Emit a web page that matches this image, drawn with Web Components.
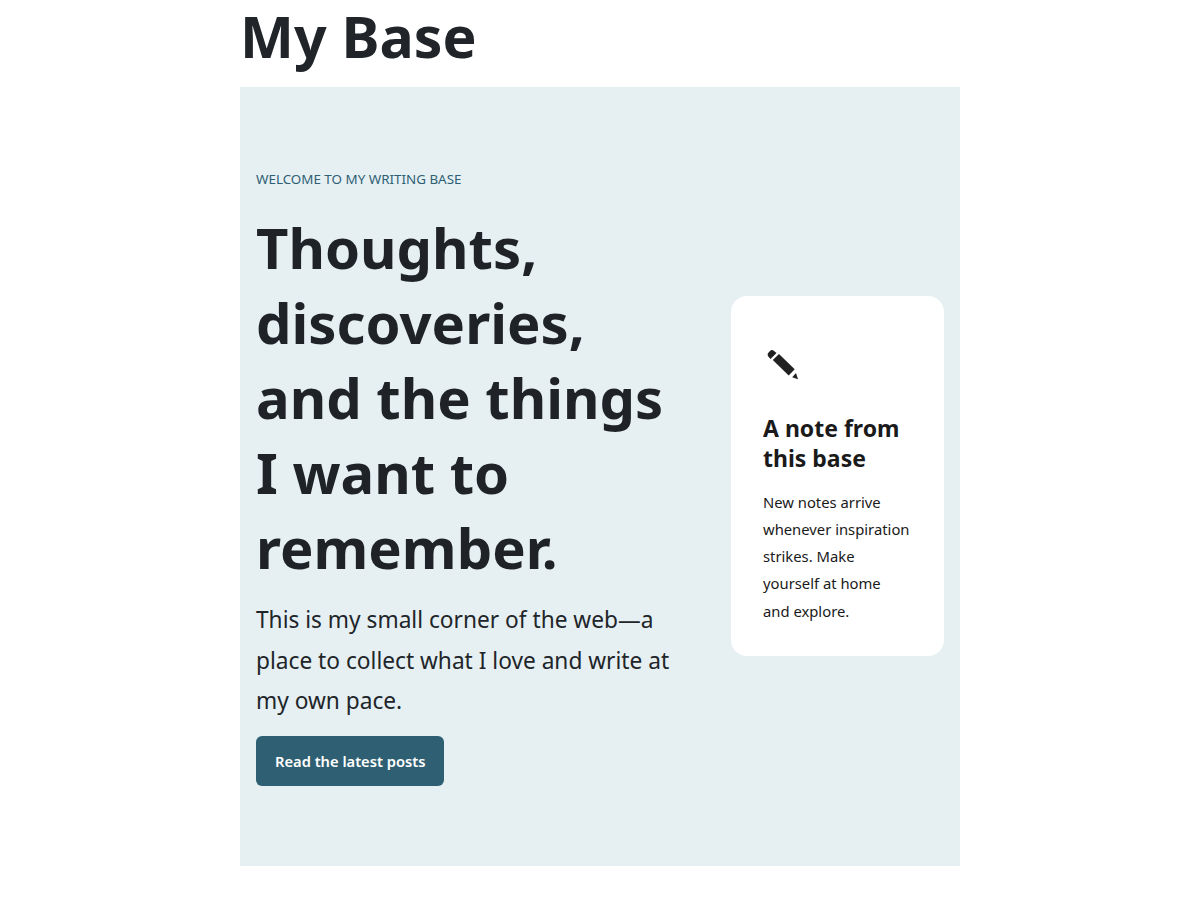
<!DOCTYPE html>
<html lang="en">
<head>
<meta charset="utf-8">
<title>My Base</title>
<style>
  body{
    margin: 0;
    background: #fff;
    color: #212529;
    font-family: "Noto Sans", "Open Sans", sans-serif;
  }
</style>
</head>
<body>
<base-page>
  <h1 slot="title">My Base</h1>
  <hero-section>
    <note-card></note-card>
  </hero-section>
</base-page>

<script>
class basePage extends HTMLElement{
    constructor(){
        super();
        this.attachShadow({mode: "open"});
        this.shadowRoot.innerHTML = `
            <style>
                :host{
                    display: block;
                    width: 720px;
                    margin: 0 auto;
                }
                ::slotted(h1){
                    margin: 0;
                    height: 87px;
                    font-size: 57.2px;
                    line-height: 72px;
                    font-weight: 700;
                    color: #212529;
                }
            </style>
            <slot name="title"></slot>
            <slot></slot>
        `;
    }
}

class heroSection extends HTMLElement{
    constructor(){
        super();
        this.attachShadow({mode: "open"});
        this.shadowRoot.innerHTML = `
            <style>
                :host{
                    display: block;
                    height: 779px;
                    box-sizing: border-box;
                    padding: 2px 16px 0;
                    background: #e6f0f3;
                }
                .row{
                    height: 100%;
                    display: grid;
                    grid-template-columns: 1fr 213px;
                    column-gap: 32px;
                    align-items: center;
                }
                .eyebrow{
                    margin: 0 0 20px;
                    font-size: 13.4px;
                    line-height: 21px;
                    color: #2f5f73;
                }
                h2{
                    margin: 0 0 15px;
                    font-size: 56.2px;
                    line-height: 75px;
                    font-weight: 700;
                    color: #1f2328;
                }
                p.lead{
                    margin: 0 0 14px;
                    font-size: 22.7px;
                    line-height: 40.8px;
                    color: #212529;
                }
                a{
                    display: inline-block;
                    padding: 12px 19px;
                    border-radius: 6px;
                    background: #2f5f73;
                    color: #fff;
                    font-size: 14.7px;
                    line-height: 26px;
                    font-weight: 600;
                    text-decoration: none;
                }
            </style>
            <div class="row">
                <div>
                    <p class="eyebrow">WELCOME TO MY WRITING BASE</p>
                    <h2>Thoughts,<br>discoveries,<br>and the things<br>I want to<br>remember.</h2>
                    <p class="lead">This is my small corner of the web—a<br>place to collect what I love and write at<br>my own pace.</p>
                    <a href="#">Read the latest posts</a>
                </div>
                <slot></slot>
            </div>
        `;
    }
}

class noteCard extends HTMLElement{
    constructor(){
        super();
        this.attachShadow({mode: "open"});
        this.shadowRoot.innerHTML = `
            <style>
                :host{
                    display: block;
                    box-sizing: border-box;
                    height: 360px;
                    margin-bottom: 4px;
                    padding: 49px 32px 0;
                    border-radius: 16px;
                    background: #fff;
                    color: #1a1a1a;
                }
                svg{
                    display: block;
                    width: 36px;
                    height: 36px;
                    margin-bottom: 32px;
                }
                h3{
                    margin: 0 0 16px;
                    font-size: 23px;
                    line-height: 30px;
                    font-weight: 700;
                }
                p{
                    margin: 0;
                    font-size: 14.8px;
                    line-height: 27.3px;
                }
            </style>
            <svg viewBox="0 0 36 36" aria-hidden="true">
                <path fill="#212121" d="M5.400 7.800 7 6c1-1.100 2.600-1.200 3.700-.2l2.800 2.200-6 6-2.200-2.600c-.9-1.100-.8-2.700.1-3.600z"/>
                <path fill="#212121" d="M16 9 31.700 24.300 25.700 30.500 9.800 15z"/>
                <path fill="#212121" d="M33 28 35 34.200 29.200 32.300z"/>
            </svg>
            <h3>A note from<br>this base</h3>
            <p>New notes arrive<br>whenever inspiration<br>strikes. Make<br>yourself at home<br>and explore.</p>
        `;
    }
}

customElements.define("base-page", basePage);
customElements.define("hero-section", heroSection);
customElements.define("note-card", noteCard);
</script>
</body>
</html>
